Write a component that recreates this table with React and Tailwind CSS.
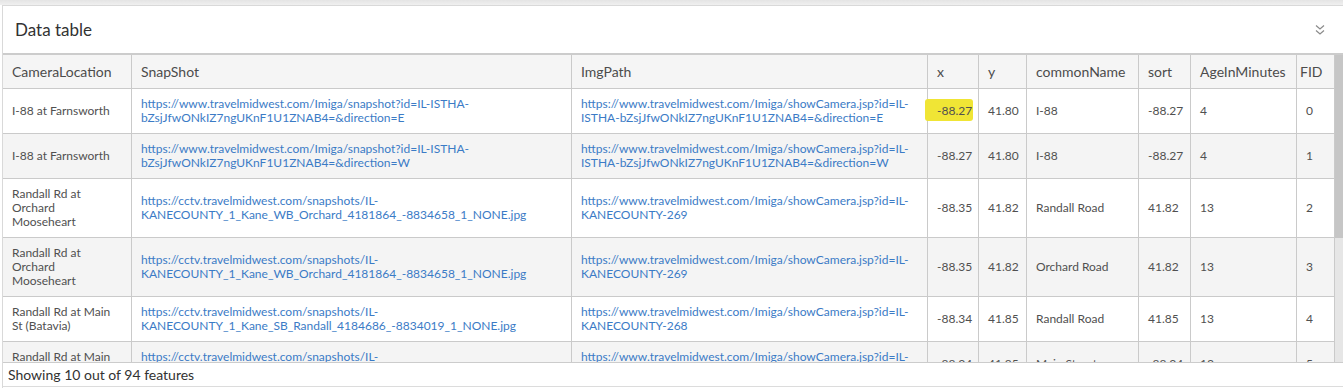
import React from "react";

const rows = [
  {
    loc: ["I-88 at Farnsworth"],
    snap: ["https://www.travelmidwest.com/Imiga/snapshot?id=IL-ISTHA-", "bZsjJfwONkIZ7ngUKnF1U1ZNAB4=&direction=E"],
    img: ["https://www.travelmidwest.com/Imiga/showCamera.jsp?id=IL-", "ISTHA-bZsjJfwONkIZ7ngUKnF1U1ZNAB4=&direction=E"],
    x: "-88.27", y: "41.80", name: "I-88", sort: "-88.27", age: "4", fid: "0", mark: true,
  },
  {
    loc: ["I-88 at Farnsworth"],
    snap: ["https://www.travelmidwest.com/Imiga/snapshot?id=IL-ISTHA-", "bZsjJfwONkIZ7ngUKnF1U1ZNAB4=&direction=W"],
    img: ["https://www.travelmidwest.com/Imiga/showCamera.jsp?id=IL-", "ISTHA-bZsjJfwONkIZ7ngUKnF1U1ZNAB4=&direction=W"],
    x: "-88.27", y: "41.80", name: "I-88", sort: "-88.27", age: "4", fid: "1",
  },
  {
    loc: ["Randall Rd at", "Orchard", "Mooseheart"],
    snap: ["https://cctv.travelmidwest.com/snapshots/IL-", "KANECOUNTY_1_Kane_WB_Orchard_4181864_-8834658_1_NONE.jpg"],
    img: ["https://www.travelmidwest.com/Imiga/showCamera.jsp?id=IL-", "KANECOUNTY-269"],
    x: "-88.35", y: "41.82", name: "Randall Road", sort: "41.82", age: "13", fid: "2",
  },
  {
    loc: ["Randall Rd at", "Orchard", "Mooseheart"],
    snap: ["https://cctv.travelmidwest.com/snapshots/IL-", "KANECOUNTY_1_Kane_WB_Orchard_4181864_-8834658_1_NONE.jpg"],
    img: ["https://www.travelmidwest.com/Imiga/showCamera.jsp?id=IL-", "KANECOUNTY-269"],
    x: "-88.35", y: "41.82", name: "Orchard Road", sort: "41.82", age: "13", fid: "3",
  },
  {
    loc: ["Randall Rd at Main", "St (Batavia)"],
    snap: ["https://cctv.travelmidwest.com/snapshots/IL-", "KANECOUNTY_1_Kane_SB_Randall_4184686_-8834019_1_NONE.jpg"],
    img: ["https://www.travelmidwest.com/Imiga/showCamera.jsp?id=IL-", "KANECOUNTY-268"],
    x: "-88.34", y: "41.85", name: "Randall Road", sort: "41.85", age: "13", fid: "4",
  },
  {
    loc: ["Randall Rd at Main", "St (Batavia)"],
    snap: ["https://cctv.travelmidwest.com/snapshots/IL-", "KANECOUNTY_1_Kane_SB_Main_4184686_-8834019_1_NONE.jpg"],
    img: ["https://www.travelmidwest.com/Imiga/showCamera.jsp?id=IL-", "KANECOUNTY-267"],
    x: "-88.34", y: "41.85", name: "Main Street", sort: "-88.34", age: "13", fid: "5",
  },
];

const cols = [
  { key: "CameraLocation", w: 129 },
  { key: "SnapShot", w: 440 },
  { key: "ImgPath", w: 356 },
  { key: "x", w: 51 },
  { key: "y", w: 48 },
  { key: "commonName", w: 112 },
  { key: "sort", w: 52 },
  { key: "AgeInMinutes", w: 106 },
  { key: "FID", w: 38 },
];

function Lines({ lines }) {
  return lines.map((l, i) => (
    <div key={i} className="whitespace-nowrap">{l}</div>
  ));
}

const td = "border border-[#cacaca] pl-[9px] pr-[6px] py-[8px] align-middle";

export default function App() {
  return (
    <div
      className="w-[1343px] h-[392px] overflow-hidden bg-white text-[#505050]"
      style={{ fontFamily: "Lato, 'Open Sans', Arial, sans-serif" }}
    >
      <div className="h-[5px] bg-gradient-to-b from-[#e4e4e4] to-[#f0f0f0]" />
      <div className="ml-[2px] h-[383px] border-l border-t border-[#d9d9d9] flex flex-col">
        <div className="h-[47px] flex items-center justify-between pl-[12px] pr-[18px]">
          <span className="text-[17px] text-[#323232]">Data table</span>
          <svg width="10" height="12" viewBox="0 0 10 12" fill="none" stroke="#8a8a8a" strokeWidth="1.2">
            <path d="M1 1.5 L5 5 L9 1.5" />
            <path d="M1 6.5 L5 10 L9 6.5" />
          </svg>
        </div>
        <div className="h-[310px] border-t-2 border-[#cccccc] border-b border-b-[#cccccc] flex overflow-hidden">
          <div className="flex-1 overflow-hidden">
            <table className="table-fixed border-collapse w-[1332px] -mt-px -ml-px text-[12px] leading-[14px]">
              <colgroup>
                {cols.map((c) => (
                  <col key={c.key} style={{ width: c.w }} />
                ))}
              </colgroup>
              <thead>
                <tr className="bg-[#f5f5f5]">
                  {cols.map((c) => (
                    <th
                      key={c.key}
                      className={
                        "border border-[#cacaca] py-[8px] text-left font-normal text-[14px] leading-[17px] text-[#4c4c4c] whitespace-nowrap " +
                        (c.key === "FID" ? "pl-[3px]" : "pl-[9px]")
                      }
                    >
                      {c.key}
                    </th>
                  ))}
                </tr>
              </thead>
              <tbody>
                {rows.map((r, i) => (
                  <tr key={i} className={i % 2 === 1 ? "bg-[#f4f4f4]" : "bg-white"}>
                    <td className={td}>
                      <Lines lines={r.loc} />
                    </td>
                    <td className={td + " text-[#3b7bc6]"}>
                      <Lines lines={r.snap} />
                    </td>
                    <td className={td + " text-[#3b7bc6]"}>
                      <Lines lines={r.img} />
                    </td>
                    <td className={td + " relative"}>
                      {r.mark && (
                        <span className="absolute left-[-3px] top-[10px] w-[48px] h-[22px] bg-[#f0e535] rounded-[3px]" />
                      )}
                      <span className="relative">{r.x}</span>
                    </td>
                    <td className={td}>{r.y}</td>
                    <td className={td}>{r.name}</td>
                    <td className={td}>{r.sort}</td>
                    <td className={td}>{r.age}</td>
                    <td className={td}>{r.fid}</td>
                  </tr>
                ))}
              </tbody>
            </table>
          </div>
          <div className="w-[8px] flex flex-col bg-[#e6e6e6]">
            <div className="h-[183px] bg-[#c6c6c6]" />
          </div>
        </div>
        <div className="h-[24px] flex items-center pl-[5px] border-b border-[#dcdcdc] text-[14px] text-[#323232]">
          Showing 10 out of 94 features
        </div>
      </div>
    </div>
  );
}
